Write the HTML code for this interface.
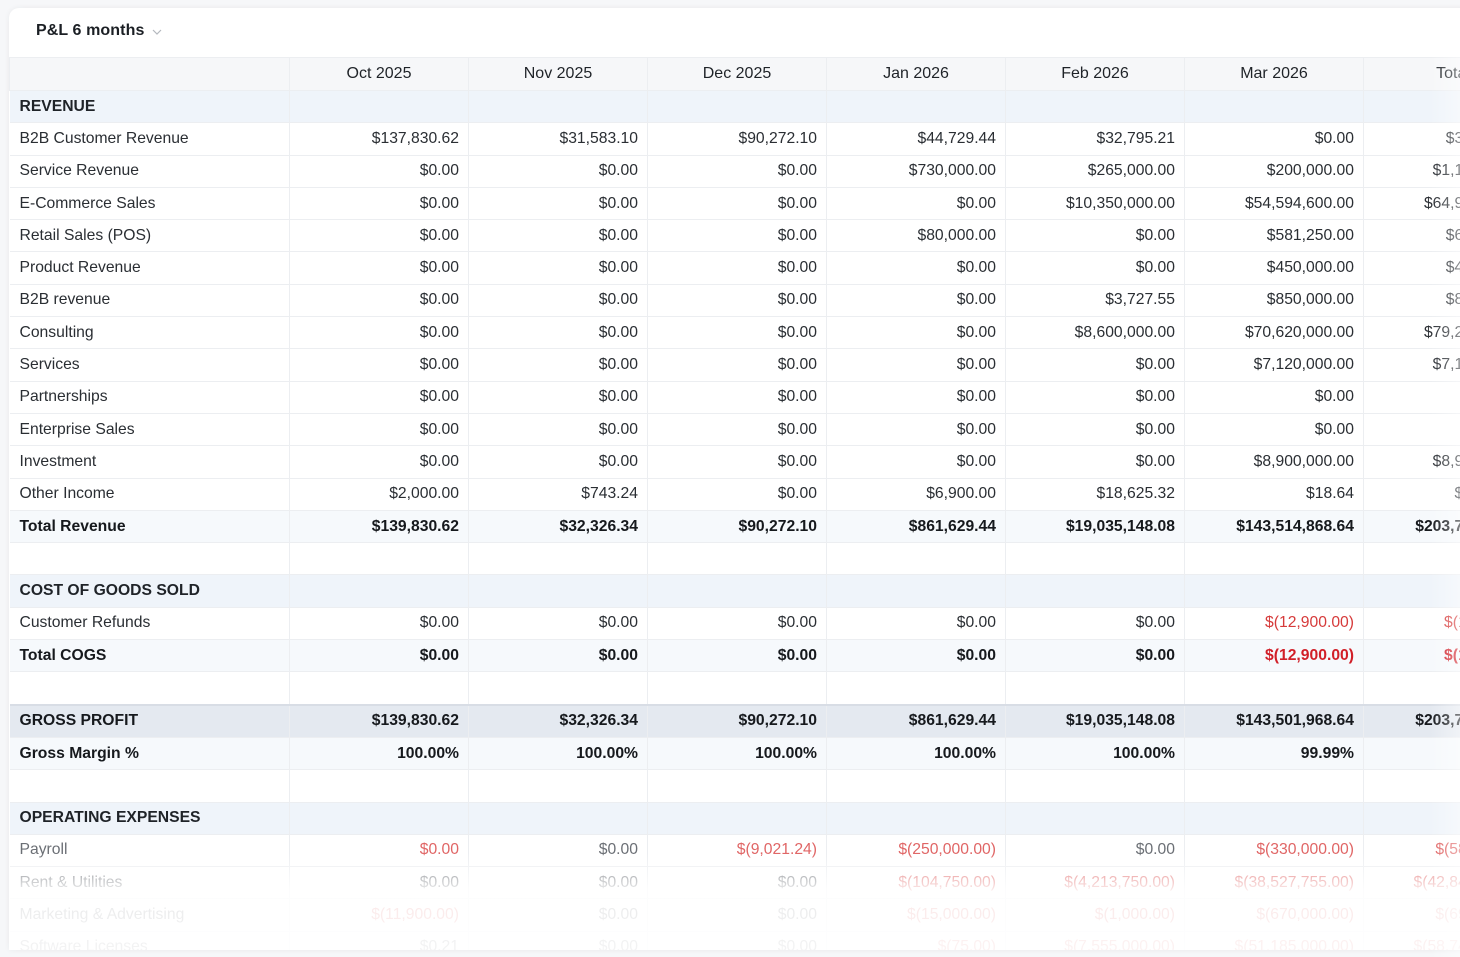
<!DOCTYPE html>
<html><head><meta charset="utf-8"><style>
html,body{margin:0;padding:0;width:1460px;height:950px;overflow:hidden;background:#f6f7f9;font-family:"Liberation Sans",Arial,sans-serif;}
.card{position:absolute;left:9px;top:8px;width:1600px;height:942px;background:#fff;border-radius:10px 0 0 0;box-shadow:0 0 6px rgba(0,0,0,.06);overflow:hidden;}
.title{position:absolute;left:27px;top:14px;font-size:16px;font-weight:bold;color:#1b1f24;letter-spacing:.1px}
.title svg{position:absolute;left:116px;top:7px}
table{position:absolute;left:0;top:49px;border-collapse:collapse;table-layout:fixed;font-size:15.7px;color:#2a2e33}
td,th{height:31.3px;border:1px solid #eceef1;padding:0 9px;white-space:nowrap;overflow:hidden;text-align:right}
th{font-weight:normal;text-align:center;background:#f6f7f9;height:32px;color:#1f2328;font-size:16px}
td:first-child{text-align:left;padding-left:10px;border-left:none}
tr.sec td{background:#eff4fa;font-weight:bold;color:#1f2328;text-transform:uppercase}
tr.tot td{background:#f6f9fc;font-weight:bold;color:#16191d}
tr.gp td{background:#e4e9f0;font-weight:bold;color:#16191d;border-top:2px solid #d8dde5}
tr.gm td{background:#f6f9fc;font-weight:bold;color:#16191d}
.r{color:#d63a3a}tr.tot td.rb{color:#d11f28}
tr.pay td{color:#6b6f75}tr.pay td.r{color:#e06565}
.fade{position:absolute;left:0;top:845px;width:1460px;height:105px;background:linear-gradient(rgba(255,255,255,0),rgba(255,255,255,.85) 35%,rgba(255,255,255,.93))}
.rf{position:absolute;left:1430px;top:57px;width:30px;height:900px;background:linear-gradient(90deg,rgba(255,255,255,0),rgba(255,255,255,.45))}
</style></head><body>
<div class="card">
<div class="title">P&amp;L 6 months<svg width="10" height="6" viewBox="0 0 10 6"><path d="M1 1l4 4 4-4" fill="none" stroke="#b4b8be" stroke-width="1.2"/></svg></div>
<table>
<colgroup><col style="width:280px"><col style="width:179px"><col style="width:179px"><col style="width:179px"><col style="width:179px"><col style="width:179px"><col style="width:179px"><col style="width:179px"></colgroup>
<tr><th></th><th>Oct 2025</th><th>Nov 2025</th><th>Dec 2025</th><th>Jan 2026</th><th>Feb 2026</th><th>Mar 2026</th><th>Total</th></tr>
<tr class="sec"><td>Revenue</td><td></td><td></td><td></td><td></td><td></td><td></td><td></td></tr>
<tr><td>B2B Customer Revenue</td><td>$137,830.62</td><td>$31,583.10</td><td>$90,272.10</td><td>$44,729.44</td><td>$32,795.21</td><td>$0.00</td><td>$337,210.47</td></tr>
<tr><td>Service Revenue</td><td>$0.00</td><td>$0.00</td><td>$0.00</td><td>$730,000.00</td><td>$265,000.00</td><td>$200,000.00</td><td>$1,195,000.00</td></tr>
<tr><td>E-Commerce Sales</td><td>$0.00</td><td>$0.00</td><td>$0.00</td><td>$0.00</td><td>$10,350,000.00</td><td>$54,594,600.00</td><td>$64,944,600.00</td></tr>
<tr><td>Retail Sales (POS)</td><td>$0.00</td><td>$0.00</td><td>$0.00</td><td>$80,000.00</td><td>$0.00</td><td>$581,250.00</td><td>$661,250.00</td></tr>
<tr><td>Product Revenue</td><td>$0.00</td><td>$0.00</td><td>$0.00</td><td>$0.00</td><td>$0.00</td><td>$450,000.00</td><td>$450,000.00</td></tr>
<tr><td>B2B revenue</td><td>$0.00</td><td>$0.00</td><td>$0.00</td><td>$0.00</td><td>$3,727.55</td><td>$850,000.00</td><td>$853,727.55</td></tr>
<tr><td>Consulting</td><td>$0.00</td><td>$0.00</td><td>$0.00</td><td>$0.00</td><td>$8,600,000.00</td><td>$70,620,000.00</td><td>$79,220,000.00</td></tr>
<tr><td>Services</td><td>$0.00</td><td>$0.00</td><td>$0.00</td><td>$0.00</td><td>$0.00</td><td>$7,120,000.00</td><td>$7,120,000.00</td></tr>
<tr><td>Partnerships</td><td>$0.00</td><td>$0.00</td><td>$0.00</td><td>$0.00</td><td>$0.00</td><td>$0.00</td><td>$0.00</td></tr>
<tr><td>Enterprise Sales</td><td>$0.00</td><td>$0.00</td><td>$0.00</td><td>$0.00</td><td>$0.00</td><td>$0.00</td><td>$0.00</td></tr>
<tr><td>Investment</td><td>$0.00</td><td>$0.00</td><td>$0.00</td><td>$0.00</td><td>$0.00</td><td>$8,900,000.00</td><td>$8,900,000.00</td></tr>
<tr><td>Other Income</td><td>$2,000.00</td><td>$743.24</td><td>$0.00</td><td>$6,900.00</td><td>$18,625.32</td><td>$18.64</td><td>$28,287.20</td></tr>
<tr class="tot"><td>Total Revenue</td><td>$139,830.62</td><td>$32,326.34</td><td>$90,272.10</td><td>$861,629.44</td><td>$19,035,148.08</td><td>$143,514,868.64</td><td>$203,774,075.22</td></tr>
<tr><td></td><td></td><td></td><td></td><td></td><td></td><td></td><td></td></tr>
<tr class="sec"><td>Cost of Goods Sold</td><td></td><td></td><td></td><td></td><td></td><td></td><td></td></tr>
<tr><td>Customer Refunds</td><td>$0.00</td><td>$0.00</td><td>$0.00</td><td>$0.00</td><td>$0.00</td><td class="r">$(12,900.00)</td><td class="r">$(12,900.00)</td></tr>
<tr class="tot"><td>Total COGS</td><td>$0.00</td><td>$0.00</td><td>$0.00</td><td>$0.00</td><td>$0.00</td><td class="rb">$(12,900.00)</td><td class="rb">$(12,900.00)</td></tr>
<tr><td></td><td></td><td></td><td></td><td></td><td></td><td></td><td></td></tr>
<tr class="gp"><td>GROSS PROFIT</td><td>$139,830.62</td><td>$32,326.34</td><td>$90,272.10</td><td>$861,629.44</td><td>$19,035,148.08</td><td>$143,501,968.64</td><td>$203,761,175.22</td></tr>
<tr class="gm"><td>Gross Margin %</td><td>100.00%</td><td>100.00%</td><td>100.00%</td><td>100.00%</td><td>100.00%</td><td>99.99%</td><td>99.99%</td></tr>
<tr><td></td><td></td><td></td><td></td><td></td><td></td><td></td><td></td></tr>
<tr class="sec"><td>Operating Expenses</td><td></td><td></td><td></td><td></td><td></td><td></td><td></td></tr>
<tr class="pay"><td>Payroll</td><td class="r">$0.00</td><td>$0.00</td><td class="r">$(9,021.24)</td><td class="r">$(250,000.00)</td><td>$0.00</td><td class="r">$(330,000.00)</td><td class="r">$(589,021.24)</td></tr>
<tr class="pay"><td>Rent &amp; Utilities</td><td>$0.00</td><td>$0.00</td><td>$0.00</td><td class="r">$(104,750.00)</td><td class="r">$(4,213,750.00)</td><td class="r">$(38,527,755.00)</td><td class="r">$(42,846,255.00)</td></tr>
<tr class="pay"><td>Marketing &amp; Advertising</td><td class="r">$(11,900.00)</td><td>$0.00</td><td>$0.00</td><td class="r">$(15,000.00)</td><td class="r">$(1,000.00)</td><td class="r">$(670,000.00)</td><td class="r">$(697,900.00)</td></tr>
<tr class="pay"><td>Software Licenses</td><td>$0.21</td><td>$0.00</td><td>$0.00</td><td class="r">$(75.00)</td><td class="r">$(7,555,000.00)</td><td class="r">$(51,185,000.00)</td><td class="r">$(58,740,074.79)</td></tr>
</table>
<div class="fade"></div>
</div>
<div class="rf"></div>
</body></html>
